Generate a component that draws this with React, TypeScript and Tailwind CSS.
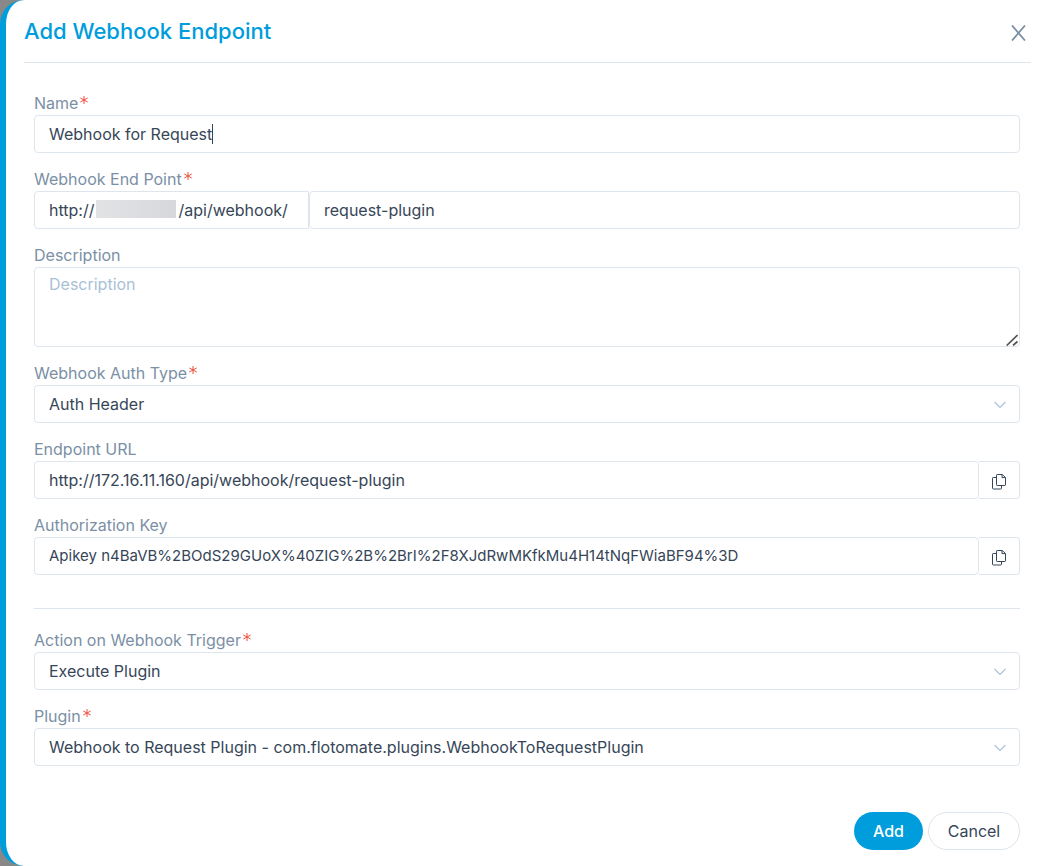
import React, { useState } from "react";

interface FieldProps {
  id: string;
  label: string;
  required?: boolean;
  children: React.ReactNode;
}

const Field: React.FC<FieldProps> = ({ id, label, required, children }) => (
  <div className="mb-[14px]">
    <label htmlFor={id} className="flex h-6 items-center text-base leading-6 text-[#7b8fa5]">
      {label}
      {required && (
        <svg viewBox="0 0 8 8" className="mb-[6px] ml-[2px] h-2 w-2" fill="none" stroke="#f04e3e" aria-hidden="true">
          <path d="M4 0v8M.3 2l7.4 4M.3 6l7.4-4" />
        </svg>
      )}
    </label>
    {children}
  </div>
);

interface SelectProps {
  id: string;
  options: string[];
}

const Select: React.FC<SelectProps> = ({ id, options }) => (
  <div className="relative">
    <select
      id={id}
      className="h-[38px] w-full appearance-none rounded border border-[#dee5ed] bg-white pr-10 pl-[14px] text-base text-[#364658] outline-none"
    >
      {options.map((option) => (
        <option key={option}>{option}</option>
      ))}
    </select>
    <svg
      viewBox="0 0 12 8"
      className="pointer-events-none absolute top-4 right-[14px] h-2 w-3"
      fill="none"
      stroke="#a9bfd6"
      strokeWidth="1.1"
      aria-hidden="true"
    >
      <path d="M.5 1 6 6.5 11.5 1" />
    </svg>
  </div>
);

interface CopyFieldProps {
  id: string;
  value: string;
  className?: string;
}

const CopyField: React.FC<CopyFieldProps> = ({ id, value, className = "text-base" }) => (
  <div className="flex h-[38px]">
    <input
      id={id}
      readOnly
      value={value}
      className={`min-w-0 flex-1 rounded border border-[#dee5ed] px-[14px] text-[#364658] outline-none ${className}`}
    />
    <button
      type="button"
      aria-label="Copy"
      onClick={() => navigator.clipboard?.writeText(value)}
      className="flex w-[41px] items-center justify-center rounded-r border border-l-0 border-[#dee5ed]"
    >
      <svg viewBox="0 0 14 16" className="mt-[3px] h-4 w-[14px]" fill="none" stroke="#364658" strokeWidth="1">
        <path d="M5.2.5h5l3.3 3v7.3a.7.7 0 0 1-.7.7H5.2a.7.7 0 0 1-.7-.7V1.2a.7.7 0 0 1 .7-.7Z" />
        <path d="M10 .6v3h3.4M4.5 3.5H1.2a.7.7 0 0 0-.7.7v10.1c0 .4.3.7.7.7h7.6c.4 0 .7-.3.7-.7v-2.8" />
      </svg>
    </button>
  </div>
);

const App: React.FC = () => {
  const [name, setName] = useState("Webhook for Request");
  const [path, setPath] = useState("request-plugin");

  return (
    <div className="min-h-screen bg-[#888888] font-['Inter',sans-serif]">
      <form
        className="min-h-screen rounded-l-3xl border-l-[6px] border-[#009ddc] bg-white pr-[15px] pl-[18px]"
        onSubmit={(e) => e.preventDefault()}
      >
        {/* Header */}
        <div className="flex h-[63px] items-center justify-between border-b border-[#dee5ed]">
          <h1 className="text-[22px] leading-[60px] font-medium text-[#009ddc]">Add Webhook Endpoint</h1>
          <button type="button" aria-label="Close" className="mt-1 mr-1 p-px">
            <svg viewBox="0 0 15 16" className="h-4 w-[15px]" fill="none" stroke="#7b8fa5" strokeWidth="1.8">
              <path d="M1 .5 14 15.5M14 .5 1 15.5" />
            </svg>
          </button>
        </div>

        {/* Fields */}
        <div className="pt-7 pr-[11px] pl-[10px]">
          <Field id="name" label="Name" required>
            <div className="flex h-[38px] items-center rounded border border-[#dee5ed] px-[14px]">
              <input
                id="name"
                value={name}
                onChange={(e) => setName(e.target.value)}
                className="field-sizing-content max-w-full text-base text-[#364658] caret-transparent outline-none"
              />
              <span className="h-5 w-px bg-[#364658]" />
            </div>
          </Field>

          <Field id="path" label="Webhook End Point" required>
            <div className="flex h-[38px]">
              <div className="flex w-[275px] shrink-0 items-center rounded-l border border-[#dee5ed] px-[14px] text-base text-[#364658]">
                <span>http://</span>
                <span className="mx-[2px] mb-[2px] h-[18px] w-20 bg-linear-to-r from-[#e2e3e5] to-[#d6d8dc]" />
                <span>/api/webhook/</span>
              </div>
              <input
                id="path"
                value={path}
                onChange={(e) => setPath(e.target.value)}
                className="min-w-0 flex-1 rounded border border-[#dee5ed] px-[14px] text-base text-[#364658] outline-none"
              />
            </div>
          </Field>

          <Field id="description" label="Description">
            <div className="relative">
              <textarea
                id="description"
                placeholder="Description"
                className="block h-20 w-full resize-none rounded border border-[#dee5ed] px-[14px] py-1 text-base leading-6 text-[#364658] outline-none placeholder:text-[#a9bfd6]"
              />
              <svg
                viewBox="0 0 12 12"
                className="absolute right-[2px] bottom-px h-3 w-3"
                stroke="#555555"
                strokeWidth="1.7"
                aria-hidden="true"
              >
                <path d="M.7 11.5 11.5 1M7 11.5l4.5-4" />
              </svg>
            </div>
          </Field>

          <Field id="auth-type" label="Webhook Auth Type" required>
            <Select id="auth-type" options={["Auth Header"]} />
          </Field>

          <Field id="endpoint-url" label="Endpoint URL">
            <CopyField id="endpoint-url" value="http://172.16.11.160/api/webhook/request-plugin" />
          </Field>

          <Field id="auth-key" label="Authorization Key">
            <CopyField
              id="auth-key"
              value="Apikey n4BaVB%2BOdS29GUoX%40ZIG%2B%2BrI%2F8XJdRwMKfkMu4H14tNqFWiaBF94%3D"
              className="text-[15px]"
            />
          </Field>

          <hr className="mt-[33px] mb-[19px] border-[#dee5ed]" />

          <Field id="action" label="Action on Webhook Trigger" required>
            <Select id="action" options={["Execute Plugin"]} />
          </Field>

          <Field id="plugin" label="Plugin" required>
            <Select id="plugin" options={["Webhook to Request Plugin - com.flotomate.plugins.WebhookToRequestPlugin"]} />
          </Field>

          {/* Actions */}
          <div className="flex justify-end gap-[5px] pt-8 pb-4">
            <button type="submit" className="h-[38px] w-[69px] rounded-full bg-[#009ddc] text-base font-medium text-white">
              Add
            </button>
            <button type="button" className="h-[38px] w-[92px] rounded-full border border-[#dee5ed] text-base text-[#364658]">
              Cancel
            </button>
          </div>
        </div>
      </form>
    </div>
  );
};

export default App;
